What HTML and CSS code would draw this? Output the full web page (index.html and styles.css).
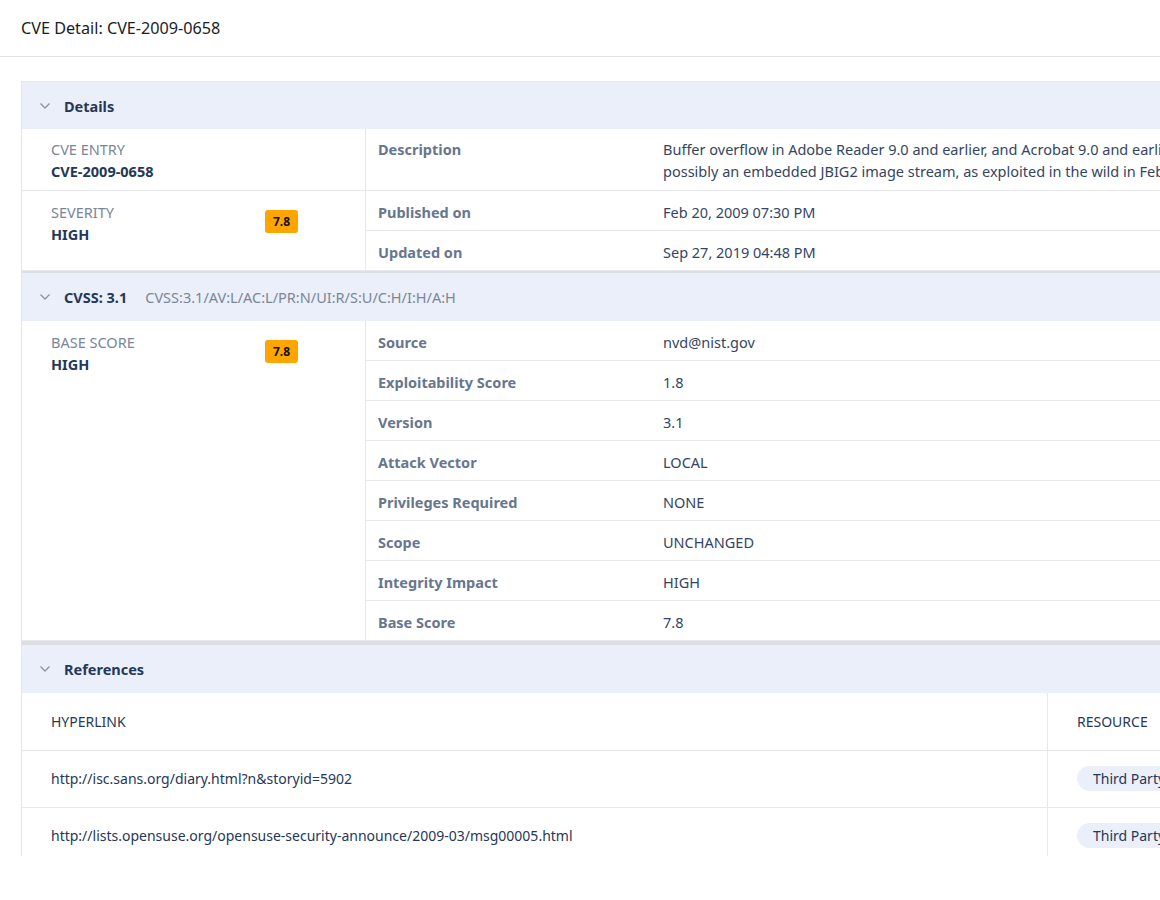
FILE: index.html
```html
<html>
    <head>
        <link rel="stylesheet" href="styles.css">
    </head>
    <body>
        <div class="topbar">CVE Detail: CVE-2009-0658</div>

        <div class="scroller">
        <div class="panel">

            <!--Details section-->
            <div class="sectionhead">
                <svg class="chev" viewBox="0 0 12 8"><path d="M1.5 1.5 L6 6 L10.5 1.5"/></svg>
                <span class="sectitle">Details</span>
            </div>
            <div class="sectionbody">
                <div class="leftcol">
                    <div class="leftcell">
                        <div class="info">
                            <div class="lbl">CVE ENTRY</div>
                            <div class="val">CVE-2009-0658</div>
                        </div>
                    </div>
                    <div class="leftcell grow">
                        <div class="info">
                            <div class="lbl">SEVERITY</div>
                            <div class="val">HIGH</div>
                        </div>
                        <span class="score">7.8</span>
                    </div>
                </div>
                <div class="rightcol">
                    <div class="kv tall">
                        <div class="key">Description</div>
                        <div class="value">Buffer overflow in Adobe Reader 9.0 and earlier, and Acrobat 9.0 and earlier allows remote attackers to execute arbitrary code via a crafted PDF document, related to a non-JavaScript function call and<br>possibly an embedded JBIG2 image stream, as exploited in the wild in February 2009 by Trojan.Pidief.E.</div>
                    </div>
                    <div class="kv">
                        <div class="key">Published on</div>
                        <div class="value">Feb 20, 2009 07:30 PM</div>
                    </div>
                    <div class="kv">
                        <div class="key">Updated on</div>
                        <div class="value">Sep 27, 2019 04:48 PM</div>
                    </div>
                </div>
            </div>

            <!--CVSS section-->
            <div class="sectionhead divided">
                <svg class="chev" viewBox="0 0 12 8"><path d="M1.5 1.5 L6 6 L10.5 1.5"/></svg>
                <span class="sectitle">CVSS: 3.1</span>
                <span class="vector">CVSS:3.1/AV:L/AC:L/PR:N/UI:R/S:U/C:H/I:H/A:H</span>
            </div>
            <div class="sectionbody">
                <div class="leftcol">
                    <div class="leftcell grow">
                        <div class="info">
                            <div class="lbl">BASE SCORE</div>
                            <div class="val">HIGH</div>
                        </div>
                        <span class="score">7.8</span>
                    </div>
                </div>
                <div class="rightcol">
                    <div class="kv"><div class="key">Source</div><div class="value">nvd@nist.gov</div></div>
                    <div class="kv"><div class="key">Exploitability Score</div><div class="value">1.8</div></div>
                    <div class="kv"><div class="key">Version</div><div class="value">3.1</div></div>
                    <div class="kv"><div class="key">Attack Vector</div><div class="value">LOCAL</div></div>
                    <div class="kv"><div class="key">Privileges Required</div><div class="value">NONE</div></div>
                    <div class="kv"><div class="key">Scope</div><div class="value">UNCHANGED</div></div>
                    <div class="kv"><div class="key">Integrity Impact</div><div class="value">HIGH</div></div>
                    <div class="kv"><div class="key">Base Score</div><div class="value">7.8</div></div>
                </div>
            </div>

            <!--References section-->
            <div class="sectionhead divided thick">
                <svg class="chev" viewBox="0 0 12 8"><path d="M1.5 1.5 L6 6 L10.5 1.5"/></svg>
                <span class="sectitle">References</span>
            </div>
            <table class="reftable">
                <tr>
                    <th class="linkcol">HYPERLINK</th>
                    <th>RESOURCE</th>
                </tr>
                <tr>
                    <td class="linkcol">http://isc.sans.org/diary.html?n&amp;storyid=5902</td>
                    <td><span class="pill">Third Party Advisory</span></td>
                </tr>
                <tr>
                    <td class="linkcol">http://lists.opensuse.org/opensuse-security-announce/2009-03/msg00005.html</td>
                    <td><span class="pill">Third Party Advisory</span></td>
                </tr>
                <tr>
                    <td class="linkcol">http://www.adobe.com/support/security/advisories/apsa09-01.html</td>
                    <td><span class="pill">Vendor Advisory</span></td>
                </tr>
            </table>

        </div>
        </div>
    </body>
</html>
```

FILE: styles.css
```css
body{
    margin:0;
    font-family:"Noto Sans", "Open Sans", sans-serif;
    font-size:14.5px;
    color:#253858;
    background:#ffffff;
    overflow:hidden;}

/*top title bar*/
.topbar{
    height:56px;
    line-height:56px;
    padding-left:21px;
    font-size:16.2px;
    color:#1a1d24;
    border-bottom:1px solid #e3e3e3;}

/*area under the title, cut off at the bottom*/
.scroller{
    height:775px;
    padding:24px 0 0 21px;
    overflow:hidden;}

.panel{
    width:1500px;
    border:1px solid #e4e6eb;
    border-right:none;}

.sectionhead{
    display:flex;
    align-items:center;
    height:47px;
    background:#ebeff9;
    padding-left:17px;}

.sectionhead.divided{
    height:48px;
    border-top:2px solid #dcdee3;}

.sectionhead.thick{
    border-top-width:4px;}

.chev{
    width:12px;
    height:8px;
    fill:none;
    stroke:#8993a4;
    stroke-width:1.3;
    margin-right:13px;}

.sectitle{
    font-weight:bold;
    font-size:14.5px;
    color:#253858;}

.vector{
    margin-left:18px;
    color:#7a869a;}

.sectionbody{
    display:flex;
    border-bottom:1px solid #e6e8ee;}

.leftcol{
    width:343px;
    flex-shrink:0;
    display:flex;
    flex-direction:column;
    border-right:1px solid #e6e8ee;}

.leftcell{
    display:flex;
    align-items:flex-start;
    padding:9px 0 8px 29px;
    border-bottom:1px solid #e6e8ee;}

.leftcell.grow{
    flex:1;
    padding-top:10px;
    border-bottom:none;}

.info{
    width:214px;}

.lbl{
    line-height:22px;
    color:#7a869a;}

.val{
    line-height:22px;
    font-weight:bold;
    color:#253858;}

.score{
    margin-top:9px;
    width:33px;
    height:23px;
    line-height:23px;
    text-align:center;
    font-size:12px;
    font-weight:bold;
    color:#111111;
    background:#ffa500;
    border-radius:3px;}

.rightcol{
    flex:1;}

.kv{
    display:flex;
    border-bottom:1px solid #e6e8ee;
    line-height:22px;
    padding:10px 0 7px 0;}

.kv:last-child{
    border-bottom:none;}

.kv.tall{
    padding:9px 0 8px 0;}

.key{
    width:285px;
    flex-shrink:0;
    padding-left:12px;
    box-sizing:border-box;
    font-weight:bold;
    color:#67768f;}

.value{
    padding-left:12px;
    white-space:nowrap;
    color:#344563;}

/*references table*/
.reftable{
    border-collapse:collapse;
    width:100%;
    font-size:14px;}

.reftable th{
    text-align:left;
    font-weight:normal;
    color:#253858;
    height:57px;
    padding:0 0 0 29px;
    border-bottom:1px solid #e6e8ee;}

.reftable td{
    height:57px;
    padding:0 0 0 29px;
    color:#253858;
    border-bottom:1px solid #e6e8ee;}

.reftable .linkcol{
    width:996px;
    border-right:1px solid #e6e8ee;}

.pill{
    display:inline-block;
    padding:0 16px;
    height:25px;
    line-height:25px;
    border-radius:13px;
    background:#ebeff9;
    color:#253858;}
```
